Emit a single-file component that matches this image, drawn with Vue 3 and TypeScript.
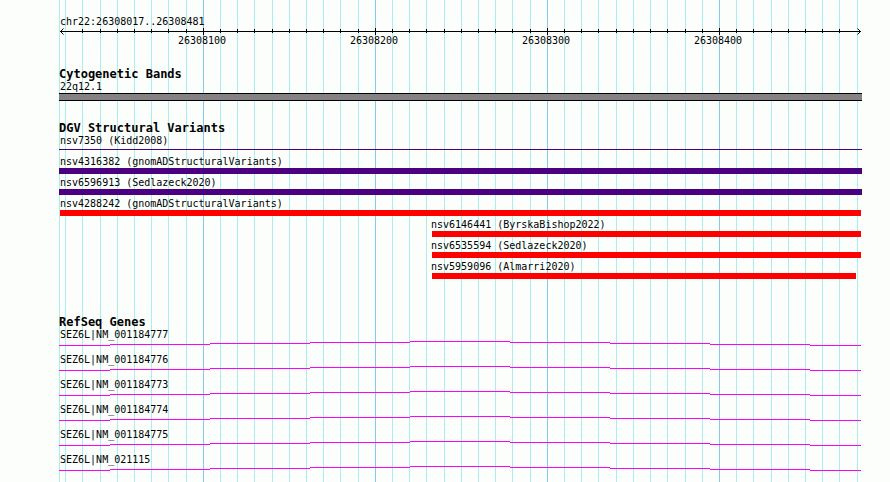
<script setup lang="ts">
import { computed, onBeforeUnmount, onMounted, ref } from 'vue'

interface Variant {
  name: string
  study: string
  kind: 'complex' | 'thin' | 'loss'
  start?: number
  end?: number
}

const chromosome = 'chr22'
const regionStart = 26308017
const regionEnd = 26308481
const span = regionEnd - regionStart + 1

const plot = ref<HTMLElement | null>(null)
const width = ref(803)
let observer: ResizeObserver | undefined

onMounted(() => {
  if (!plot.value) return
  width.value = plot.value.clientWidth
  observer = new ResizeObserver(() => {
    if (plot.value) width.value = plot.value.clientWidth
  })
  observer.observe(plot.value)
})

onBeforeUnmount(() => observer?.disconnect())

// One pixel of inset on the left, two on the right.
const toPixel = (position: number): number =>
  Math.round(1 + ((position - regionStart) * (width.value - 3)) / span)

const gridLines = computed(() => {
  const lines: { position: number; x: number; major: boolean }[] = []
  for (let p = Math.ceil(regionStart / 10) * 10; p <= regionEnd; p += 10) {
    lines.push({ position: p, x: toPixel(p), major: p % 100 === 0 })
  }
  return lines
})

const ticks = computed(() => gridLines.value.filter((l) => l.x > 8 && l.x < width.value - 8))
const majors = computed(() => gridLines.value.filter((l) => l.major))
const axisEnd = computed(() => width.value - 1)

const variants: Variant[] = [
  { name: 'nsv7350', study: 'Kidd2008', kind: 'thin' },
  { name: 'nsv4316382', study: 'gnomADStructuralVariants', kind: 'complex' },
  { name: 'nsv6596913', study: 'Sedlazeck2020', kind: 'complex' },
  { name: 'nsv4288242', study: 'gnomADStructuralVariants', kind: 'loss', start: 26308017, end: 26308482 },
  { name: 'nsv6146441', study: 'ByrskaBishop2022', kind: 'loss', start: 26308233, end: 26308482 },
  { name: 'nsv6535594', study: 'Sedlazeck2020', kind: 'loss', start: 26308233, end: 26308482 },
  { name: 'nsv5959096', study: 'Almarri2020', kind: 'loss', start: 26308233, end: 26308479 },
]

const left = (v: Variant): number => (v.start === undefined ? 0 : toPixel(v.start))
// The pixel that holds the end position belongs to the bar.
const barWidth = (v: Variant): number =>
  (v.end === undefined ? width.value : toPixel(v.end) + 1) - left(v)
const labelIndent = (v: Variant): number => Math.max(0, left(v) - 2)

const genes = [
  'NM_001184777',
  'NM_001184776',
  'NM_001184773',
  'NM_001184774',
  'NM_001184775',
  'NM_021115',
]

// Shallow intron hat, rising one pixel per step to the middle of the region.
const intronPath = computed(() => {
  const total = width.value - 1
  const step = (width.value - 3) / 8
  let d = ''
  let from = 0
  for (let i = 0; i < 9; i++) {
    const to = i === 8 ? total : Math.round(step * (i + 0.5)) + 1
    d += `M${from} ${Math.abs(4 - i) + 0.5}H${to}`
    from = to
  }
  return d
})
</script>

<template>
  <main class="browser">
    <div ref="plot" class="plot">
      <svg class="grid" aria-hidden="true">
        <rect class="minor" x="0" y="0" width="1" height="100%" />
        <rect
          v-for="line in gridLines"
          :key="line.position"
          :class="line.major ? 'major' : 'minor'"
          :x="line.x"
          y="0"
          width="1"
          height="100%"
        />
      </svg>

      <header class="ruler">
        <p class="label">{{ chromosome }}:{{ regionStart }}..{{ regionEnd }}</p>
        <svg class="axis">
          <path :d="`M1 3.5H${axisEnd}`" />
          <path class="arrow" :d="`M4.5 .5L1.5 3.5L4.5 6.5M${axisEnd - 3.5} .5L${axisEnd - 0.5} 3.5L${axisEnd - 3.5} 6.5`" />
          <path
            v-for="tick in ticks"
            :key="tick.position"
            :d="tick.major ? `M${tick.x + 0.5} 0V7` : `M${tick.x + 0.5} 1V5`"
          />
          <text v-for="tick in majors" :key="tick.position" :x="tick.x - 1" y="16">{{ tick.position }}</text>
        </svg>
      </header>

      <section class="track cytobands">
        <h2>Cytogenetic Bands</h2>
        <p class="label">22q12.1</p>
        <div class="band"></div>
      </section>

      <section class="track variants">
        <h2>DGV Structural Variants</h2>
        <ul>
          <li v-for="v in variants" :key="v.name">
            <p class="label" :style="{ marginLeft: labelIndent(v) + 'px' }">{{ v.name }} ({{ v.study }})</p>
            <div
              class="bar"
              :class="v.kind"
              :style="{ marginLeft: left(v) + 'px', width: barWidth(v) + 'px' }"
            ></div>
          </li>
        </ul>
      </section>

      <section class="track genes">
        <h2>RefSeq Genes</h2>
        <ul>
          <li v-for="gene in genes" :key="gene">
            <p class="label">SEZ6L|{{ gene }}</p>
            <svg class="intron" aria-hidden="true"><path :d="intronPath" /></svg>
          </li>
        </ul>
      </section>
    </div>
  </main>
</template>

<style>
body {
  margin: 0;
  background: #fcfefc;
}
</style>

<style scoped>
.browser {
  display: flex;
  box-sizing: border-box;
  min-height: 100vh;
  padding: 0 28px 0 59px;
  background: #fcfefc;
  color: #000;
  font: 10px/12px "DejaVu Sans Mono", "Liberation Mono", monospace;
}

.plot {
  position: relative;
  flex: 1;
  min-width: 0;
  padding-top: 16px;
}

.grid {
  position: absolute;
  inset: 0;
  width: 100%;
  height: 100%;
  shape-rendering: crispEdges;
}

.minor {
  fill: #aceeec;
}

.major {
  fill: #84caec;
}

.ruler,
.track {
  position: relative;
}

.label {
  margin: 0;
  padding-left: 1px;
  white-space: nowrap;
}

.axis {
  display: block;
  width: 100%;
  height: 20px;
  overflow: visible;
}

.axis path {
  fill: none;
  stroke: #000;
  stroke-width: 1px;
  shape-rendering: crispEdges;
}

.axis .arrow {
  shape-rendering: auto;
}

.axis text {
  text-anchor: middle;
}

.cytobands {
  margin-top: 20px;
}

.variants {
  margin-top: 21px;
}

.genes {
  margin-top: 34px;
}

h2 {
  margin: 0;
  font-size: 12px;
  line-height: 13px;
  font-weight: bold;
  white-space: nowrap;
}

ul {
  margin: 0;
  padding: 0;
  list-style: none;
}

.band {
  box-sizing: border-box;
  height: 8px;
  border: solid #000;
  border-width: 1px 0;
  background: #848284;
}

.variants li {
  height: 21px;
}

.bar {
  height: 6px;
}

.complex {
  background: #4b0082;
}

.thin {
  box-sizing: border-box;
  height: 3px;
  border-bottom: 1px solid #4b0082;
}

.loss {
  background: #ff0000;
}

.intron {
  display: block;
  width: 100%;
  height: 13px;
}

.intron path {
  fill: none;
  stroke: #ff00ff;
  stroke-width: 1px;
  shape-rendering: crispEdges;
}
</style>
